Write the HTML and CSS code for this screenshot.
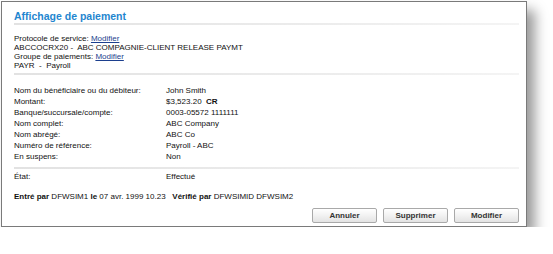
FILE: index.html
```html
<!DOCTYPE html>
<html lang="fr">
<head>
<meta charset="utf-8">
<link rel="stylesheet" href="styles.css">
</head>
<body>
<div class="window">
  <h1 class="title">Affichage de paiement</h1>
  <div class="sep"></div>
  <div class="info">
    <div>Protocole de service: <a href="#">Modifier</a></div>
    <div>ABCCOCRX20 -&nbsp; ABC COMPAGNIE-CLIENT RELEASE PAYMT</div>
    <div>Groupe de paiements: <a href="#">Modifier</a></div>
    <div>PAYR&nbsp; -&nbsp; Payroll</div>
  </div>
  <div class="sep"></div>
  <div class="details">
    <span>Nom du bénéficiaire ou du débiteur:</span><span>John Smith</span>
    <span>Montant:</span><span>$3,523.20&nbsp; <b>CR</b></span>
    <span>Banque/succursale/compte:</span><span>0003-05572 1111111</span>
    <span>Nom complet:</span><span>ABC Company</span>
    <span>Nom abrégé:</span><span>ABC Co</span>
    <span>Numéro de référence:</span><span>Payroll - ABC</span>
    <span>En suspens:</span><span>Non</span>
  </div>
  <div class="sep"></div>
  <div class="details state">
    <span>État:</span><span>Effectué</span>
  </div>
  <div class="audit"><b>Entré par</b> DFWSIM1 <b>le</b> 07 avr. 1999 10.23&nbsp;&nbsp; <b>Vérifié par</b> DFWSIMID DFWSIM2</div>
  <div class="actions">
    <button class="btn">Annuler</button>
    <button class="btn">Supprimer</button>
    <button class="btn">Modifier</button>
  </div>
</div>
</body>
</html>
```

FILE: styles.css
```css
html, body {
  margin: 0;
  padding: 0;
  background: #ffffff;
}
body {
  font-family: "Liberation Sans", Arial, sans-serif;
  font-size: 8px;
  color: #111;
}
.window {
  box-sizing: border-box;
  margin: 1px 0 0 1px;
  width: 526px;
  height: 226px;
  border: 1px solid #7a7a7a;
  background: #fff;
  box-shadow: 8px 9px 12px rgba(0, 0, 0, 0.4);
  padding: 0 7px 0 12px;
  display: flex;
  flex-direction: column;
}
.title {
  margin: 8px 0 0 0;
  font-size: 10.5px;
  line-height: 12px;
  font-weight: bold;
  color: #1f86cf;
}
.sep {
  height: 2px;
  margin-top: 1px;
  background: linear-gradient(to right, #e2e2e2, #ececec 60%, #f4f4f4);
}
.info {
  margin: 9px 0 2px 0;
  line-height: 9px;
}
.info a {
  color: #1c3f8e;
  text-decoration: underline;
}
.details {
  display: grid;
  grid-template-columns: 152px 1fr;
  line-height: 11px;
  margin: 10px 0 4px 0;
}
.details.state {
  margin: 2px 0 0 0;
}
.audit {
  margin-top: 9px;
  line-height: 11px;
}
.actions {
  display: flex;
  justify-content: flex-end;
  gap: 6px;
  margin-top: 6px;
}
.btn {
  width: 65px;
  height: 15px;
  padding: 0;
  font-family: "Liberation Sans", Arial, sans-serif;
  font-size: 8px;
  font-weight: bold;
  color: #333;
  border: 1px solid #a9a9a9;
  border-radius: 2px;
  background: linear-gradient(#ffffff, #f2f2f2 50%, #e3e3e3);
}
```
